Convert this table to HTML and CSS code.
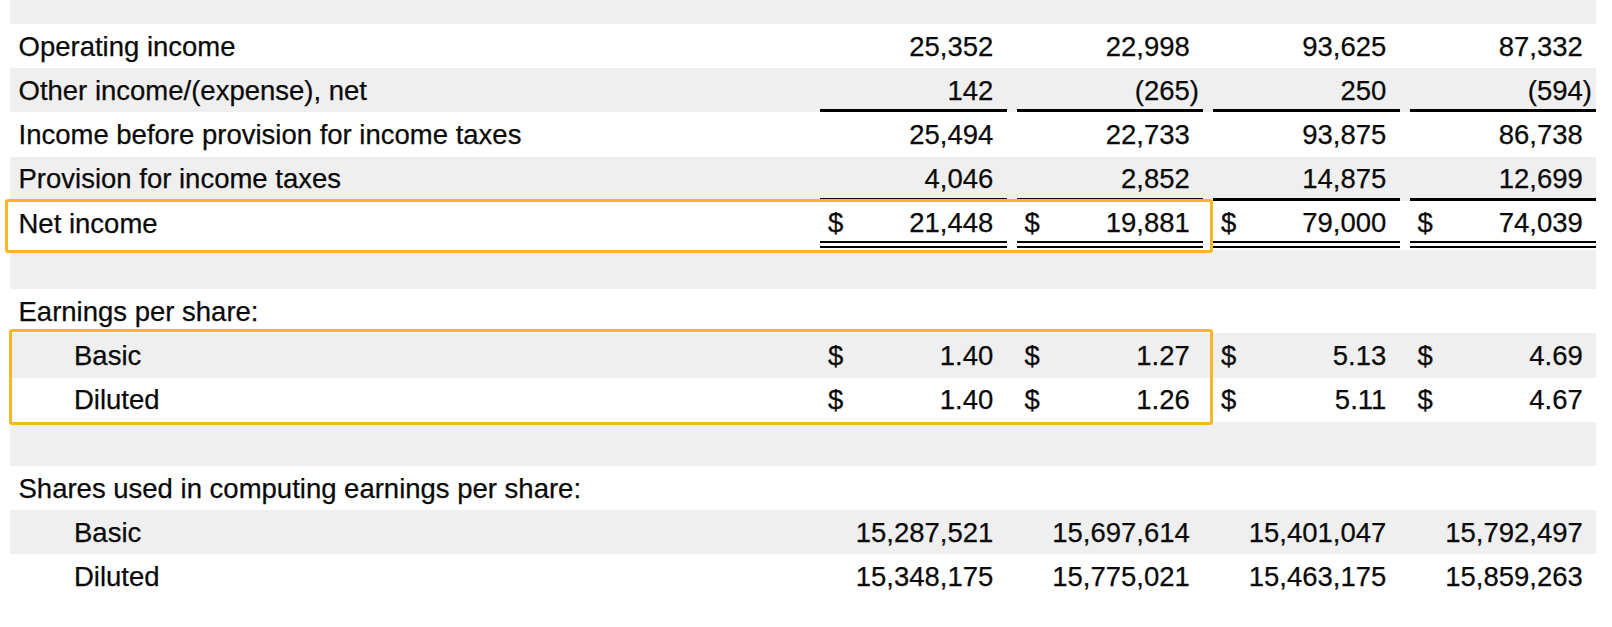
FILE: index.html
```html
<!DOCTYPE html>
<html lang="en">
<head>
<meta charset="utf-8">
<title>Income statement</title>
<link rel="stylesheet" href="styles.css">
</head>
<body>
<div class="sheet">
  <div class="row alt top"></div>

  <div class="row">
    <div class="lbl">Operating income</div>
    <div class="val"><span class="num">25,352</span></div>
    <div class="val"><span class="num">22,998</span></div>
    <div class="val"><span class="num">93,625</span></div>
    <div class="val"><span class="num">87,332</span></div>
  </div>
  <div class="row alt u1">
    <div class="lbl">Other income/(expense), net</div>
    <div class="val"><span class="num">142</span></div>
    <div class="val"><span class="num neg">(265)</span></div>
    <div class="val"><span class="num">250</span></div>
    <div class="val"><span class="num neg">(594)</span></div>
  </div>
  <div class="row">
    <div class="lbl">Income before provision for income taxes</div>
    <div class="val"><span class="num">25,494</span></div>
    <div class="val"><span class="num">22,733</span></div>
    <div class="val"><span class="num">93,875</span></div>
    <div class="val"><span class="num">86,738</span></div>
  </div>
  <div class="row alt u1">
    <div class="lbl">Provision for income taxes</div>
    <div class="val"><span class="num">4,046</span></div>
    <div class="val"><span class="num">2,852</span></div>
    <div class="val"><span class="num">14,875</span></div>
    <div class="val"><span class="num">12,699</span></div>
  </div>
  <div class="row net">
    <div class="lbl">Net income</div>
    <div class="val"><span class="cur">$</span><span class="num">21,448</span></div>
    <div class="val"><span class="cur">$</span><span class="num">19,881</span></div>
    <div class="val"><span class="cur">$</span><span class="num">79,000</span></div>
    <div class="val"><span class="cur">$</span><span class="num">74,039</span></div>
  </div>
  <div class="row alt gap"></div>

  <div class="row">
    <div class="lbl">Earnings per share:</div>
  </div>
  <div class="row alt">
    <div class="lbl ind">Basic</div>
    <div class="val"><span class="cur">$</span><span class="num">1.40</span></div>
    <div class="val"><span class="cur">$</span><span class="num">1.27</span></div>
    <div class="val"><span class="cur">$</span><span class="num">5.13</span></div>
    <div class="val"><span class="cur">$</span><span class="num">4.69</span></div>
  </div>
  <div class="row">
    <div class="lbl ind">Diluted</div>
    <div class="val"><span class="cur">$</span><span class="num">1.40</span></div>
    <div class="val"><span class="cur">$</span><span class="num">1.26</span></div>
    <div class="val"><span class="cur">$</span><span class="num">5.11</span></div>
    <div class="val"><span class="cur">$</span><span class="num">4.67</span></div>
  </div>
  <div class="row alt"></div>

  <div class="row">
    <div class="lbl">Shares used in computing earnings per share:</div>
  </div>
  <div class="row alt">
    <div class="lbl ind">Basic</div>
    <div class="val"><span class="num">15,287,521</span></div>
    <div class="val"><span class="num">15,697,614</span></div>
    <div class="val"><span class="num">15,401,047</span></div>
    <div class="val"><span class="num">15,792,497</span></div>
  </div>
  <div class="row">
    <div class="lbl ind">Diluted</div>
    <div class="val"><span class="num">15,348,175</span></div>
    <div class="val"><span class="num">15,775,021</span></div>
    <div class="val"><span class="num">15,463,175</span></div>
    <div class="val"><span class="num">15,859,263</span></div>
  </div>

  <div class="hl hl-net"></div>
  <div class="hl hl-eps"></div>
</div>
</body>
</html>
```

FILE: styles.css
```css
html, body {
  margin: 0;
  padding: 0;
  background: #ffffff;
}

body {
  font-family: "Liberation Sans", Arial, Helvetica, sans-serif;
  font-size: 27.5px;
  color: #0a0a0a;
  -webkit-text-stroke: 0.25px #0a0a0a;
}

.sheet {
  position: relative;
  margin-left: 10px;
  width: 1586px;
}

.row {
  display: grid;
  grid-template-columns: 800px repeat(4, 196.5px);
  height: 44.2px;
  box-sizing: border-box;
}

.row.alt {
  background: #efefef;
}

.row.top {
  height: 24px;
}

.row.net {
  height: 49.5px;
}

.row.gap {
  height: 38.9px;
}

.lbl {
  display: flex;
  align-items: center;
  padding-left: 8.5px;
  padding-top: 1.5px;
  white-space: nowrap;
}

.lbl.ind {
  padding-left: 64px;
}

.val {
  display: flex;
  align-items: center;
  margin-left: 10px;
  padding: 1.5px 4px 0 8px;
  box-sizing: border-box;
  white-space: nowrap;
}

.num {
  margin-left: auto;
  padding-right: 0.333em;
}

.num.neg {
  padding-right: 0;
}

.row.u1 .val {
  border-bottom: 3px solid #000000;
  padding-top: 3.5px;
}

.row.net .lbl {
  padding-bottom: 4px;
}

.row.net .val {
  margin-bottom: 2px;
  padding-top: 3.5px;
  border-bottom: 7px double #000000;
}

.hl {
  position: absolute;
  box-sizing: border-box;
  border: 3px solid #f6b722;
  border-radius: 3px;
  pointer-events: none;
}

.hl-net {
  left: -5.5px;
  top: 198.5px;
  width: 1208.2px;
  height: 54px;
}

.hl-eps {
  left: -1px;
  top: 329px;
  width: 1203.7px;
  height: 95.5px;
}
```
